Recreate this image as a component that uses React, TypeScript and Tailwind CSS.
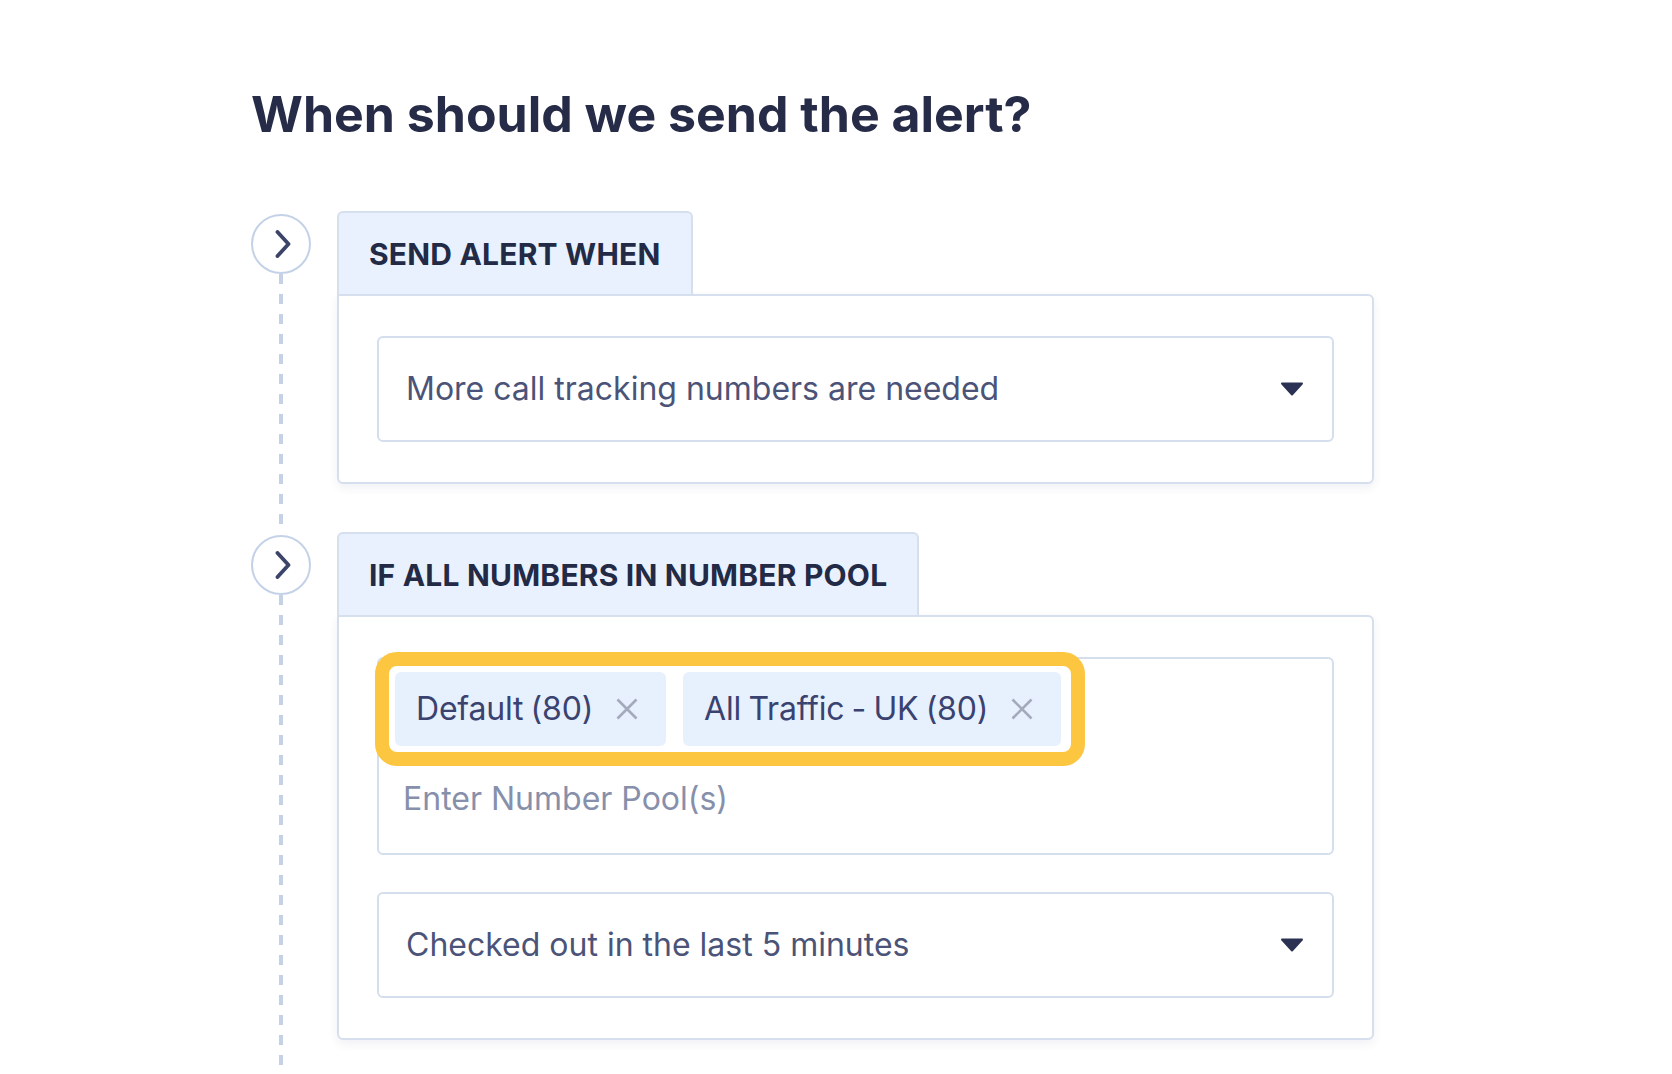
import { ReactNode } from 'react';

function Chevron() {
  return (
    <svg width="16" height="28" viewBox="0 0 16 28" fill="none" stroke="#3c4469" strokeWidth="3.8" strokeLinecap="round" strokeLinejoin="round">
      <path d="M2.5 2 L13.5 14 L2.5 26" />
    </svg>
  );
}

function Caret() {
  return (
    <svg width="24" height="14" viewBox="0 0 24 14" fill="#2b3254" stroke="#2b3254" strokeWidth="2" strokeLinejoin="round">
      <path d="M2 1.5 L22 1.5 L12 12.5 Z" />
    </svg>
  );
}

function Close() {
  return (
    <svg width="22" height="22" viewBox="0 0 22 22" fill="none" stroke="#a4aabb" strokeWidth="2.6">
      <path d="M1.5 1.5 L20.5 20.5 M20.5 1.5 L1.5 20.5" />
    </svg>
  );
}

function Select({ label }: { label: string }) {
  return (
    <div className="h-[106px] border-2 border-[#d5deed] rounded-[6px] flex items-center justify-between pl-[27px] pr-[28px]">
      <span className="text-[32px] leading-[36px] text-[#4b5478]">{label}</span>
      <Caret />
    </div>
  );
}

function Chip({ label }: { label: string }) {
  return (
    <div className="h-[74px] bg-[#e7f0fd] rounded-[6px] flex items-center pl-[21px] pr-[28px] gap-[23px]">
      <span className="text-[32px] leading-[36px] text-[#3a4270] tracking-[-0.2px] [word-spacing:-1.5px]">{label}</span>
      <Close />
    </div>
  );
}

function Step({ title, children, last }: { title: string; children: ReactNode; last?: boolean }) {
  return (
    <div className="flex">
      <div className="w-[60px] flex flex-col items-center">
        <div className="mt-[3px] w-[60px] h-[60px] shrink-0 rounded-full border-2 border-[#c4d2e8] bg-white flex items-center justify-center pl-[4px]">
          <Chevron />
        </div>
        <div className="w-[4px] flex-1 bg-[repeating-linear-gradient(to_bottom,#c5d2e6_0px,#c5d2e6_10px,transparent_10px,transparent_20px)]" />
      </div>
      <div className={`ml-[26px] w-[1037px] ${last ? 'pb-[30px]' : 'pb-[48px]'}`}>
        <div className="inline-flex h-[83px] items-center px-[30px] bg-[#e8f1fd] border-2 border-b-0 border-[#d6dfee] rounded-t-[6px]">
          <span className="text-[30px] leading-[36px] font-bold uppercase text-[#232a46] tracking-[0.2px]">{title}</span>
        </div>
        <div className="bg-white border-2 border-[#d6dfee] rounded-b-[6px] rounded-tr-[6px] px-[38px] py-[40px] shadow-[0_4px_10px_rgba(40,60,110,0.07)] flex flex-col">
          {children}
        </div>
      </div>
    </div>
  );
}

export default function App() {
  return (
    <div className="h-[1074px] overflow-hidden bg-white pl-[251px] pt-[89px] font-[Inter,sans-serif]">
      <h1 className="text-[50px] leading-[50px] font-bold text-[#262b47]">When should we send the alert?</h1>

      <div className="mt-[72px]">
        <Step title="Send alert when">
          <Select label="More call tracking numbers are needed" />
        </Step>

        <Step title="If all numbers in number pool" last>
          <div className="h-[198px] border-2 border-[#d5deed] rounded-[6px] flex flex-col items-start">
            <div className="-mt-[7px] -ml-[4px] inline-flex gap-[17px] border-[14px] border-[#fdc641] rounded-[22px] py-[6px] pl-[6px] pr-[10px] bg-white">
              <Chip label="Default (80)" />
              <Chip label="All Traffic - UK (80)" />
            </div>
            <div className="ml-[24px] mt-[15px] text-[32px] leading-[36px] text-[#8790ab]">Enter Number Pool(s)</div>
          </div>
          <div className="mt-[37px]">
            <Select label="Checked out in the last 5 minutes" />
          </div>
        </Step>
      </div>
    </div>
  );
}
